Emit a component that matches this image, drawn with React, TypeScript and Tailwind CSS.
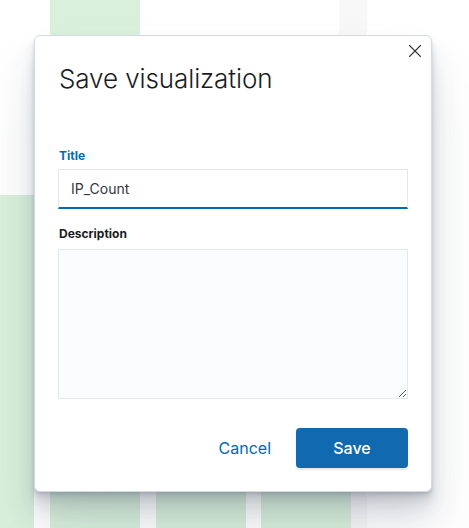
import { X } from 'lucide-react';

const bars = [
  { w: 'w-[34px]', h: 'h-[333px]' },
  { w: 'w-[90px]', h: 'h-[528px]' },
  { w: 'w-[90px]', h: 'h-[300px]' },
  { w: 'w-[90px]', h: 'h-[260px]' },
];

export default function App() {
  return (
    <div className="relative h-[528px] w-full overflow-hidden bg-white font-['Inter',sans-serif]">
      {/* chart behind the modal */}
      <div className="absolute left-[339px] top-0 h-full w-[28px] bg-[#f8f8f9]" />
      <div className="relative flex h-full items-end gap-4">
        {bars.map((b, i) => (
          <div key={i} className={`${b.w} ${b.h} bg-[#d9f0dc] ${i === 3 ? '-ml-[1px]' : ''}`} />
        ))}
      </div>

      {/* modal */}
      <div className="absolute left-[34px] top-[35px] flex h-[457px] w-[398px] flex-col rounded-md border border-[#d3dae6] bg-white px-[23px] shadow-[0_40px_64px_0_rgba(65,78,101,0.1),0_24px_32px_0_rgba(65,78,101,0.1),0_16px_16px_0_rgba(65,78,101,0.1),0_8px_8px_0_rgba(65,78,101,0.1),0_4px_4px_0_rgba(65,78,101,0.1),0_2px_2px_0_rgba(65,78,101,0.1)]">
        <button className="absolute right-[5px] top-[4px] flex h-[22px] w-[22px] items-center justify-center text-[#343741]">
          <X className="h-[22px] w-[22px]" strokeWidth={1.2} />
        </button>

        <h2 className="mt-[27px] pl-px text-[26px] font-light leading-[32px] tracking-[-0.1px] text-[#1a1c21]">
          Save visualization
        </h2>

        <label className="mt-[53px] pl-px text-xs font-bold leading-4 text-[#006bb4]">Title</label>
        <div className="mt-[5px] flex h-10 items-center border border-b-2 border-[#e4e7ec] border-b-[#006bb4] bg-white px-3 text-sm text-[#343741]">
          IP_Count
        </div>

        <label className="mt-[17px] pl-px text-xs font-bold leading-4 text-[#1a1c21]">Description</label>
        <textarea className="mt-[7px] h-[150px] w-full resize-y border border-[#e4e7ec] bg-[#fbfcfd] outline-none" />

        <div className="mt-[29px] flex items-center justify-end gap-[25px]">
          <button className="text-base text-[#006bb4]">Cancel</button>
          <button className="flex h-10 w-[112px] items-center justify-center rounded-[4px] bg-[#116ab0] text-base font-medium text-white shadow-[0_2px_2px_rgba(0,0,0,0.1)]">
            Save
          </button>
        </div>
      </div>
    </div>
  );
}
